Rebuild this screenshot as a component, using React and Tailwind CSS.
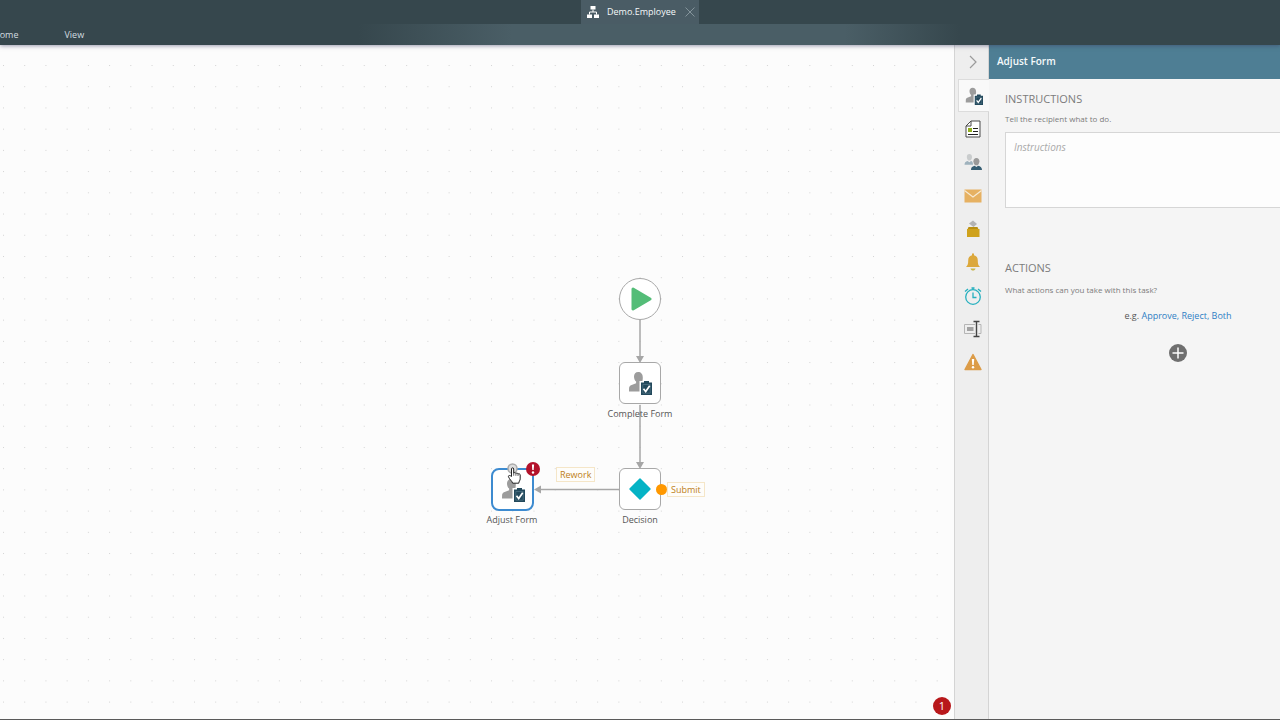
import React, { useState } from "react";

const INK = "#23495c";

function PersonTask({ size = 24 }) {
  return (
    <svg width={size} height={size} viewBox="0 0 24 24" aria-hidden="true">
      <path
        d="M10.2 1C7.6 1 6 2.9 6 5.4c0 2.1.8 4.1 2.1 5.1v1.7L3 14.2c-1.3.6-1.8 1.5-1.9 2.9L1 20.5h11V13l1.3-1c1.2-1.3 1.5-3.2 1.5-5.6C14.8 3 12.800 1 10.200 1z"
        fill="#9c9c9c"
      />
      <path d="M11.500 10H24v14H11.500z" fill="#fff" />
      <path d="M13 11.500h3V10h5v1.500h3V24H13z" fill={INK} />
      <path d="M14.800 13.500h7.400v8.700h-7.400z" fill="none" stroke="#5d7f90" strokeWidth=".6" />
      <path d="M15.500 17.800l2.200 2.800 4-5.800" fill="none" stroke="#fff" strokeWidth="1.700" />
    </svg>
  );
}

function FormIcon() {
  return (
    <svg width="18" height="18" viewBox="0 0 18 18" fill="none" aria-hidden="true">
      <path d="M7 1h9v16H2V6z" fill="#fff" stroke="#4a4a4a" />
      <path d="M7 1v5H2" stroke="#4a4a4a" />
      <path d="M4 8h4v4H4z" fill="#93b01f" />
      <path d="M9 8.500h5M9 11.500h5M4 14.500h10" stroke="#222" />
    </svg>
  );
}

function PeopleIcon() {
  return (
    <svg width="18" height="18" viewBox="0 0 18 18" aria-hidden="true">
      <path d="M5.300 1C3.700 1 2.800 2.200 2.800 3.900c0 1.500.7 2.900 1.600 3.500h2c.9-.6 1.600-2 1.600-3.500C8 2.200 6.900 1 5.300 1z" fill="#c9cccd" />
      <path d="M.5 11.800c0-2 1-3.200 3.200-3.800l1.600 1.300L7 8c1.300.3 2 1.200 2 3.800z" fill="#9fb2bd" />
      <path d="M12.400 5c-1.900 0-3 1.300-3 3.200 0 1.700.8 3.300 1.800 4h2.400c1.100-.8 1.800-2.300 1.800-4 0-1.900-1.100-3.200-3-3.200z" fill="#9a9a9a" />
      <path d="M7 17c0-2.400.8-3.600 3.700-4.300l1.700 1.300 1.600-1.300c2.800.6 4 1.800 4 4.300z" fill="#365e73" />
    </svg>
  );
}

function MailIcon() {
  return (
    <svg width="18" height="14" viewBox="0 0 18 14" aria-hidden="true">
      <path d="M.5 .5h17v13H.5z" fill="#e6b162" />
      <path d="M.5 1.500L9 8l8.500-6.500" fill="none" stroke="#f7ead4" strokeWidth="1.200" />
    </svg>
  );
}

function BallotIcon() {
  return (
    <svg width="16" height="18" viewBox="0 0 16 18" aria-hidden="true">
      <path d="M4 3.500L8 .5l4 3.500-3.500 3z" fill="#b3b3b3" />
      <path d="M3.500 7h9l1 2.500h-11z" fill="#b98f12" />
      <path d="M2 9h12.500v8H2z" fill="#cfa21c" />
    </svg>
  );
}

function BellIcon() {
  return (
    <svg width="16" height="18" viewBox="0 0 16 18" aria-hidden="true">
      <path d="M7 .5h2v1.700c2.600.6 3.800 2.400 3.800 5.300 0 3.500.5 4.700 2.200 6.500H1c1.700-1.800 2.200-3 2.200-6.500 0-2.900 1.200-4.700 3.800-5.300z" fill="#dca83b" />
      <path d="M5.500 15.500h5c-.4 1.500-1.200 2-2.500 2s-2.100-.5-2.500-2z" fill="#c9b548" />
    </svg>
  );
}

function ClockIcon() {
  return (
    <svg width="18" height="18" viewBox="0 0 18 18" fill="none" stroke="#27b0bf" strokeWidth="1.300" aria-hidden="true">
      <circle cx="9" cy="10" r="7.300" />
      <path d="M9 5.500V10.500h3.500M7.500 1h3M9 1v1.500M1 4.500L4 2M17 4.500L14 2" />
    </svg>
  );
}

function RenameIcon() {
  return (
    <svg width="18" height="18" viewBox="0 0 18 18" fill="none" aria-hidden="true">
      <path d="M11 4.500H.5v9H11M14.500 4.500H17v9h-2.500" stroke="#b5b5b5" />
      <path d="M3 7h6.500v4H3z" fill="#a2a2a2" />
      <path d="M9.500 1.500h6M9.500 16.500h6M12.500 1.500v15" stroke="#444" strokeWidth="1.400" />
    </svg>
  );
}

function WarningIcon() {
  return (
    <svg width="18" height="18" viewBox="0 0 18 18" aria-hidden="true">
      <path d="M9 1.500L17 16.500H1z" fill="#dc9c48" stroke="#dc9c48" strokeWidth="1.400" strokeLinejoin="round" />
      <path d="M7.800 6h2.400l-.5 6H8.300z" fill="#fff" />
      <circle cx="9" cy="14.200" r="1.200" fill="#fff" />
    </svg>
  );
}

const tools = [
  { name: "Task", icon: <PersonTask size={18} /> },
  { name: "Form", icon: <FormIcon /> },
  { name: "Recipients", icon: <PeopleIcon /> },
  { name: "Email", icon: <MailIcon /> },
  { name: "Voting", icon: <BallotIcon /> },
  { name: "Reminders", icon: <BellIcon /> },
  { name: "Deadline", icon: <ClockIcon /> },
  { name: "Rename", icon: <RenameIcon /> },
  { name: "Exceptions", icon: <WarningIcon /> },
];

function Header() {
  return (
    <header className="relative z-10 h-[45px] shrink-0 bg-[#36474d] text-[9px] text-[#d3dde0] shadow-[0_1px_4px_rgba(60,60,100,0.5)]">
      <div className="flex h-6 justify-center">
        <div className="flex w-[118px] items-center bg-[#4a5c65] pl-1.5">
          <svg width="12" height="12" viewBox="0 0 12 12" className="shrink-0" aria-hidden="true">
            <path d="M3.500 0h5v3.500h-5zM0 8.500h5V12H0zM7 8.500h5V12H7z" fill="#fff" />
            <path d="M6 3.500V6M2.500 8.500V6h7v2.500" fill="none" stroke="#fff" />
          </svg>
          <span className="ml-2 font-medium text-[#f5f9fa]">Demo.Employee</span>
          <button aria-label="Close tab" className="ml-2 text-[#84949b]">
            <svg width="12" height="12" viewBox="0 0 12 12" aria-hidden="true">
              <path d="M1.500 1.500l9 9M10.500 1.500l-9 9" stroke="currentColor" />
            </svg>
          </button>
        </div>
      </div>
      <nav className="flex h-[21px] items-center gap-[46px] bg-[linear-gradient(to_right,#36474d_28%,#4a5e66_40%,#4a5e66_66%,#36474d_75%)]">
        <button className="-ml-[7px]">Home</button>
        <button>View</button>
      </nav>
    </header>
  );
}

function Caption({ className, children }) {
  return (
    <div className={`absolute w-28 text-center text-[9px] leading-4 text-[#555555] ${className}`}>
      {children}
    </div>
  );
}

function Canvas() {
  return (
    <main className="relative min-w-0 flex-1 overflow-hidden bg-[#fcfcfc]">
      <svg className="absolute inset-0 h-full w-full" aria-hidden="true">
        <defs>
          <pattern id="dots" x="3" y="20" width="21.220" height="21.220" patternUnits="userSpaceOnUse">
            <rect width="1" height="1" fill="#d3d3d3" />
          </pattern>
        </defs>
        <rect width="100%" height="100%" fill="url(#dots)" />
        <g stroke="#a6a6a6" strokeWidth="1.500" fill="none">
          <path d="M640 275v38M640 360v58M619 444.500h-78" />
        </g>
        <path d="M636 311h8l-4 7zM636 417h8l-4 7zM541 440.500v8l-7-4z" fill="#a6a6a6" />
      </svg>

      <button aria-label="Start" className="absolute left-[619px] top-[233px] flex size-[42px] items-center justify-center rounded-full border border-[#a8a8a8] bg-white">
        <svg width="24" height="26" viewBox="0 0 24 26" aria-hidden="true">
          <path d="M5 3l17 10L5 23z" fill="#54bd78" stroke="#54bd78" strokeWidth="3" strokeLinejoin="round" />
        </svg>
      </button>

      <button aria-label="Complete Form task" className="absolute left-[619px] top-[317px] flex size-[42px] items-center justify-center rounded-md border border-[#a8a8a8] bg-white">
        <PersonTask />
      </button>
      <Caption className="left-[584px] top-[361px]">Complete Form</Caption>

      <button aria-label="Decision step" className="absolute left-[619px] top-[423px] flex size-[42px] items-center justify-center rounded-md border border-[#a8a8a8] bg-white">
        <svg width="24" height="24" viewBox="0 0 24 24" aria-hidden="true">
          <path d="M12 2l10 10-10 10L2 12z" fill="#05b3c5" stroke="#05b3c5" strokeWidth="1.500" strokeLinejoin="round" />
        </svg>
      </button>
      <Caption className="left-[584px] top-[467px]">Decision</Caption>

      <button aria-label="Adjust Form task" className="absolute left-[491px] top-[423px] flex size-[43px] items-center justify-center rounded-lg border-2 border-[#3d8bd0] bg-white">
        <PersonTask />
      </button>
      <Caption className="left-[456px] top-[467px]">Adjust Form</Caption>

      <span className="absolute left-[526px] top-[417px] size-3.5 rounded-full bg-[#b3122b]">
        <svg width="14" height="14" viewBox="0 0 14 14" aria-hidden="true">
          <path d="M5.900 2.500h2.200l-.4 5.500H6.300z" fill="#fff" />
          <circle cx="7" cy="10.500" r="1.200" fill="#fff" />
        </svg>
      </span>

      <span className="absolute left-[556px] top-[422px] border border-[#f5e6c8] bg-[#fefdfa] px-[3px] text-[9px] leading-[13px] text-[#bd7d18]">
        Rework
      </span>
      <span className="absolute left-[656px] top-[439px] size-[11px] rounded-full bg-[#ff9800]" />
      <span className="absolute left-[667px] top-[437px] border border-[#f5e6c8] bg-[#fefdfa] px-[3px] text-[9px] leading-[13px] text-[#bd7d18]">
        Submit
      </span>

      {/* connector handle with the hand over it */}
      <svg className="absolute left-[504px] top-[417px]" width="20" height="24" viewBox="0 0 20 24" aria-hidden="true">
        <circle cx="8.500" cy="6.500" r="4.500" fill="#ddd" stroke="#aaa" strokeWidth="1.500" />
        <path
          d="M7.500 14.500V7c0-1.600 2.200-1.600 2.200 0v4.300c.4-1 2-.9 2.200.2.600-.7 1.900-.5 2.100.5.900-.5 2.200-.1 2.200.9v4c0 1.700-1.400 2.300-1.400 4.300H8.600c-.4-2.200-3.100-3.600-4.100-6.400-.5-1.500 1.400-1.800 3-.3z"
          fill="#fff"
          stroke="#222"
        />
        <path d="M9.700 11.300v2.500M11.900 11.500v2.300M14 12v2" stroke="#444" strokeWidth=".8" />
      </svg>

      <button aria-label="1 error" className="absolute bottom-1 right-[3px] size-[18px] rounded-full bg-[#b8181b] text-[11px] leading-[18px] text-white">
        1
      </button>
    </main>
  );
}

function Rail({ active, onSelect }) {
  return (
    <aside className="w-[35px] shrink-0 border-x border-[#d4d4d4] bg-[#eeeeee] pl-[3px]">
      <button aria-label="Collapse panel" className="flex h-[34px] w-full items-center justify-center text-[#9b9b9b]">
        <svg width="10" height="14" viewBox="0 0 10 14" fill="none" aria-hidden="true">
          <path d="M2 1l6 6-6 6" stroke="currentColor" strokeWidth="1.200" />
        </svg>
      </button>
      <div className="grid h-[300px] grid-rows-9">
        {tools.map((tool, i) => (
          <button
            key={tool.name}
            aria-label={tool.name}
            onClick={() => onSelect(i)}
            className={`flex items-center justify-center ${
              i === active ? "-mr-px border border-r-0 border-[#dcdcdc] bg-[#f9f9f9]" : ""
            }`}
          >
            {tool.icon}
          </button>
        ))}
      </div>
    </aside>
  );
}

function Panel() {
  const [instructions, setInstructions] = useState("");

  return (
    <section className="w-[291px] shrink-0 overflow-hidden bg-[#f5f5f5] text-[#7c7c7c]">
      <div className="w-[378px]">
        <h1 className="flex h-[34px] items-center bg-[#4e7e94] px-2 pb-0.5 text-[10px] font-semibold text-[#f5fafb]">
          Adjust Form
        </h1>
        <div className="px-4">
          <h2 className="pt-3 text-[11px] leading-4">
            <label htmlFor="instructions">INSTRUCTIONS</label>
          </h2>
          <p className="mt-1.5 text-[8px] leading-3">Tell the recipient what to do.</p>
          <textarea
            id="instructions"
            value={instructions}
            onChange={(e) => setInstructions(e.target.value)}
            placeholder="Instructions"
            className="mt-[7px] block h-[76px] w-full resize-none border border-[#d6d6d6] bg-[#fdfdfd] px-2 py-1.5 text-[10px] leading-4 placeholder:italic placeholder:text-[#aaaaaa]"
          />
          <h2 className="mt-[52px] text-[11px] leading-4">ACTIONS</h2>
          <p className="mt-2 text-[8px] leading-3">What actions can you take with this task?</p>
          <p className="mt-3 text-center text-[9px] leading-4 text-[#555555]">
            e.g.{" "}
            <a href="#approve" className="text-[#2f80c4]">Approve,</a>{" "}
            <a href="#reject" className="text-[#2f80c4]">Reject,</a>{" "}
            <a href="#both" className="text-[#2f80c4]">Both</a>
          </p>
          <button aria-label="Add action" className="mx-auto mt-5 block">
            <svg width="18" height="18" viewBox="0 0 18 18" aria-hidden="true">
              <circle cx="9" cy="9" r="9" fill="#6f6f6f" />
              <path d="M9 3.500v11M3.500 9h11" stroke="#fff" strokeWidth="1.500" />
            </svg>
          </button>
        </div>
      </div>
    </section>
  );
}

export default function App() {
  const [active, setActive] = useState(0);

  return (
    <div className="flex h-screen flex-col overflow-hidden border-b border-[#5a5a5a] font-['Open_Sans','Noto_Sans',sans-serif]">
      <Header />
      <div className="flex min-h-0 flex-1">
        <Canvas />
        <Rail active={active} onSelect={setActive} />
        <Panel />
      </div>
    </div>
  );
}
